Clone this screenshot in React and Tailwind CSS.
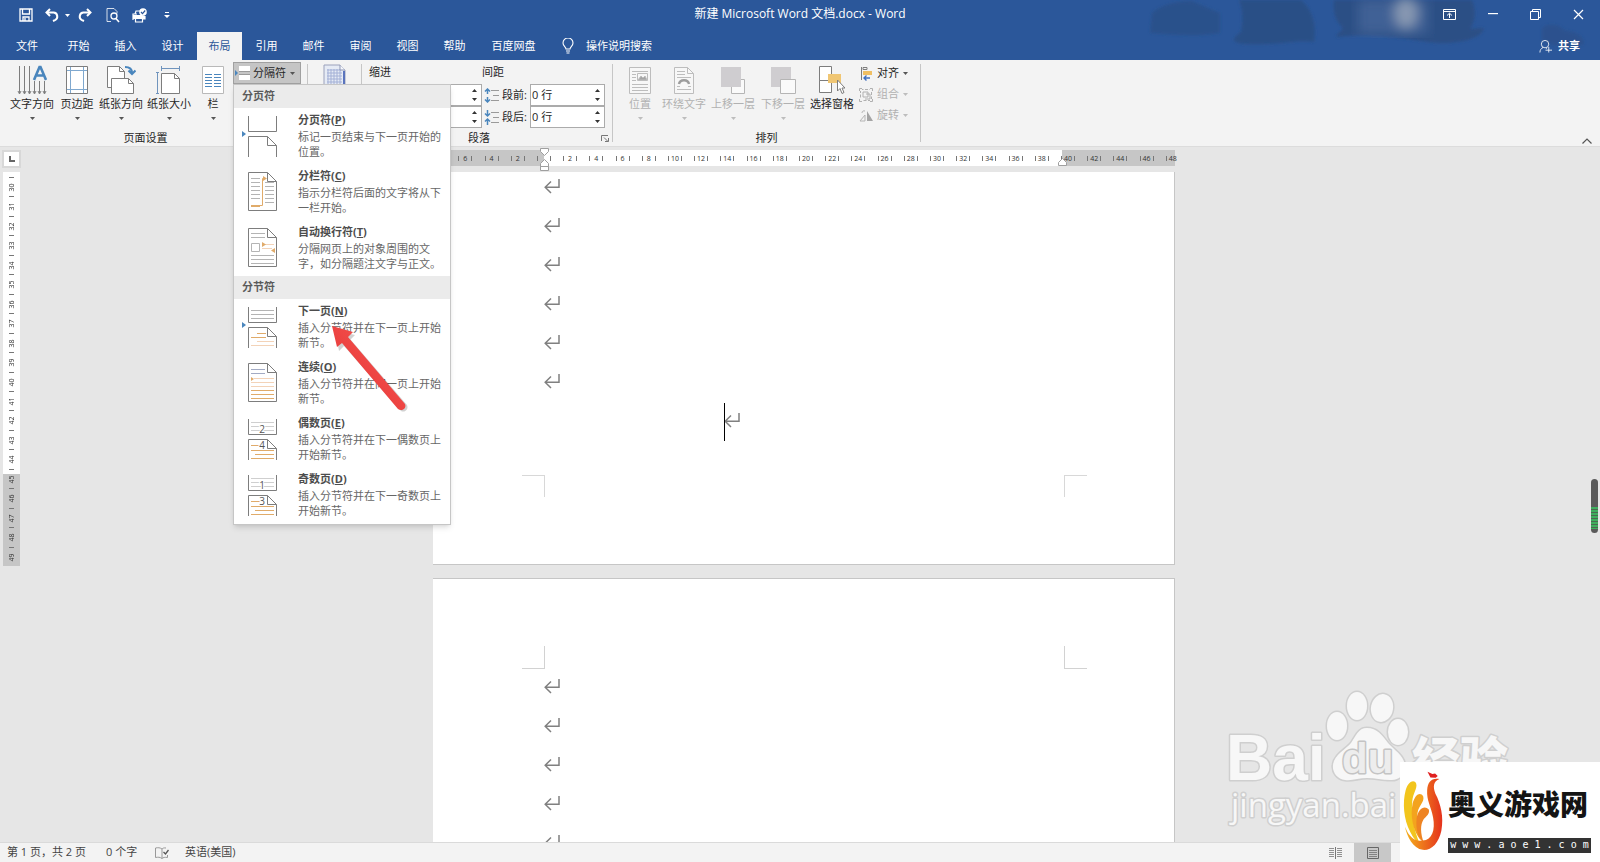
import { Fragment, useState } from "react";

const TABS = ["开始", "插入", "设计", "布局", "引用", "邮件", "审阅", "视图", "帮助"];

const PAGE_BREAKS = [
    { title: "分页符", hotkey: "P", text: "标记一页结束与下一页开始的位置。", icon: "page" },
    { title: "分栏符", hotkey: "C", text: "指示分栏符后面的文字将从下一栏开始。", icon: "column" },
    { title: "自动换行符", hotkey: "T", text: "分隔网页上的对象周围的文字，如分隔题注文字与正文。", icon: "wrap" },
];

const SECTION_BREAKS = [
    { title: "下一页", hotkey: "N", text: "插入分节符并在下一页上开始新节。", icon: "next" },
    { title: "连续", hotkey: "O", text: "插入分节符并在同一页上开始新节。", icon: "continuous" },
    { title: "偶数页", hotkey: "E", text: "插入分节符并在下一偶数页上开始新节。", icon: "even" },
    { title: "奇数页", hotkey: "D", text: "插入分节符并在下一奇数页上开始新节。", icon: "odd" },
];

const RULER_H = [8, 6, 4, 2, 0, ...Array.from({ length: 24 }, (_, i) => (i + 1) * 2)];
const RULER_V = Array.from({ length: 20 }, (_, i) => i + 30);

const Caret = ({ className = "text-[#555]" }) => (
    <svg className={className} width="5" height="3" viewBox="0 0 5 3" aria-hidden="true">
        <path d="M0 0h5L2.5 3z" fill="currentColor" />
    </svg>
);

/* ---------- Title bar ---------- */

const SaveIcon = () => (
    <svg width="14" height="14" viewBox="0 0 14 14" fill="none" stroke="#fff" strokeWidth="1.3">
        <path d="M1 1h12v12H1z" />
        <path d="M3.5 1v5h7V1" />
        <path d="M4 13V9h6v4M6 10v3" />
    </svg>
);

const UndoIcon = ({ flip }) => (
    <svg width="14" height="14" viewBox="0 0 14 14" fill="none" stroke="#fff" strokeWidth="2" className={flip ? "-scale-x-100" : ""}>
        <path d="M5 1L1.5 4.5 5 8" />
        <path d="M2 4.5h6.5a4 4 0 0 1 1.5 7.6L8 13" />
    </svg>
);

const PreviewIcon = () => (
    <svg width="14" height="15" viewBox="0 0 14 15" fill="none" stroke="#fff">
        <path d="M5 13.5H1V.5h7l3 3v2" opacity=".8" />
        <circle cx="8" cy="8" r="3" strokeWidth="1.3" />
        <path d="M10 10.5l3 3.5" strokeWidth="1.6" />
    </svg>
);

const PrintIcon = () => (
    <svg width="16" height="15" viewBox="0 0 16 15" fill="none" stroke="#fff" strokeWidth="1.2">
        <path d="M1 12V6h4M13 8v3h-2M3 6l1-3h4" />
        <path d="M1 7h9l3 1v3H1z" fill="#fff" stroke="none" />
        <path d="M3.500 10.500h7v3.500h-7z" fill="#2b579a" />
        <circle cx="11" cy="4" r="3.8" fill="#fff" stroke="none" />
        <path d="M9 4l1.5 1.7L13.2 2.5" stroke="#2b579a" />
    </svg>
);

const TitleSmudges = () => (
    <svg className="pointer-events-none absolute top-0 right-0" width="460" height="60" viewBox="0 0 460 60" aria-hidden="true">
        <defs>
            <filter id="soft"><feGaussianBlur stdDeviation="1.5" /></filter>
            <filter id="softer"><feGaussianBlur stdDeviation="6" /></filter>
        </defs>
        <g fill="#2a4c80" filter="url(#soft)">
            <path d="M12 13c8-8 24-12 40-12l28 12v20c-24 4-46 2-70 0z" opacity=".55" />
            <path d="M99 0h62c10 8 16 22 13 42-15-3-40 4-68 2-14-1-16-4-5-12 2-12 2-22-2-32z" opacity=".75" />
            <path d="M194 0h138c4 10 4 20-2 29l14-1c-2 9-18 14-38 15-24 1-56-12-110-6 2-6 8-6 6-10-8-8-9-18-8-27z" opacity=".8" />
            <path d="M402 28c6-6 18-4 22 2 10 2 20 4 20 14-14 6-34 2-42-4z" opacity=".45" />
        </g>
        <g filter="url(#softer)">
            <path d="M218 0h70v34h-70z" fill="#4a6a9d" opacity=".7" />
            <ellipse cx="266" cy="13" rx="12" ry="16" fill="#8f9fb5" opacity=".9" />
        </g>
    </svg>
);

const TitleBar = () => (
    <div className="relative flex h-7 items-center justify-between">
        <div className="flex items-center pt-0.5 pl-[19px] text-white">
            <button aria-label="保存" className="mr-3"><SaveIcon /></button>
            <button aria-label="撤消" className="mr-1.5"><UndoIcon /></button>
            <Caret className="mr-2 text-white" />
            <button aria-label="恢复" className="mr-3.5"><UndoIcon flip /></button>
            <button aria-label="打印预览" className="mr-3"><PreviewIcon /></button>
            <button aria-label="快速打印" className="mr-4"><PrintIcon /></button>
            <button aria-label="自定义快速访问工具栏">
                <svg width="6" height="7" viewBox="0 0 6 7" fill="#fff"><path d="M1 0h4v1H1zM0 3h6L3 6z" /></svg>
            </button>
        </div>
        <h1 className="absolute inset-x-0 text-center text-xs whitespace-pre text-white">新建 Microsoft Word 文档.docx - Word</h1>
        <div className="relative flex">
            <button aria-label="功能区显示选项" className="flex w-[43px] justify-center">
                <svg width="13" height="11" viewBox="0 0 13 11" fill="none" stroke="#fff">
                    <path d="M.5.5h12v10H.5zM.5 2.500h12M6.500 9V4.500M4 6.500l2.500-2.300L9 6.500" />
                </svg>
            </button>
            <button aria-label="最小化" className="flex w-[43px] items-center justify-center">
                <svg width="10" height="2" viewBox="0 0 10 2"><path d="M0 0h10v1.200H0z" fill="#fff" /></svg>
            </button>
            <button aria-label="还原" className="flex w-[43px] justify-center">
                <svg width="11" height="11" viewBox="0 0 11 11" fill="none" stroke="#fff">
                    <path d="M.5 2.500h8v8h-8zM2.500 2.500v-2h8v8h-2" />
                </svg>
            </button>
            <button aria-label="关闭" className="flex w-[43px] justify-center">
                <svg width="11" height="11" viewBox="0 0 11 11" stroke="#fff" strokeWidth="1.200"><path d="M1 1l9 9M10 1l-9 9" /></svg>
            </button>
        </div>
    </div>
);

const TabRow = ({ active, onSelect }) => (
    <div className="relative mt-1 flex h-7 items-stretch text-white">
        <nav className="flex gap-0.5">
            <button className="w-[54px]">文件</button>
            {TABS.map((tab) => (
                <button
                    key={tab}
                    onClick={() => onSelect(tab)}
                    className={tab === active ? "w-[45px] bg-[#f3f3f3] text-[#2b579a]" : "w-[45px]"}
                >
                    {tab}
                </button>
            ))}
            <button className="w-[69px]">百度网盘</button>
        </nav>
        <button className="ml-3.5 flex items-center gap-3">
            <svg width="12" height="16" viewBox="0 0 12 16" fill="none" stroke="#fff" strokeWidth="1.1">
                <path d="M4 11c0-2-3-3-3-6a5 5 0 0 1 10 0c0 3-3 4-3 6zM4 13h4M4.5 15h3" />
            </svg>
            操作说明搜索
        </button>
        <button className="mr-5 ml-auto flex items-center gap-1.5 font-bold">
            <svg width="13" height="14" viewBox="0 0 14 14" fill="none" stroke="#fff" strokeWidth=".9">
                <circle cx="6.500" cy="5" r="4" />
                <path d="M1 14c0-3 1.500-4.500 3.500-5.500M7.500 9l1 .8M7 11.500h7M10.500 8v6" />
            </svg>
            共享
        </button>
    </div>
);

/* ---------- Ribbon icons ---------- */

const line = "#7d7d7d";
const blue = "#4a86bd";

const TextDirectionIcon = () => (
    <svg width="30" height="30" viewBox="0 0 30 30" fill="none" stroke={line}>
        <path d="M2.500 1v27M7.500 1v27M12.500 1v27M17.500 16v12M22.500 16v12M27.500 16v12" />
        <path d="M1 26l1.500 3L4 26M6 26l1.500 3L9 26M11 26l1.500 3 1.500-3M16 26l1.500 3 1.500-3M21 26l1.500 3 1.500-3M26 26l1.500 3 1.500-3" />
        <path d="M17 15l5.500-13h1L29 15M19 10.500h8" stroke={blue} strokeWidth="2.600" />
    </svg>
);

const MarginsIcon = () => (
    <svg width="22" height="28" viewBox="0 0 22 28" fill="#fff">
        <path d="M.5.5h21v27H.5z" stroke={line} />
        <path d="M4.500 1v26M17.500 1v26M1 4.500h20M1 23.500h20" stroke="#7fa8cf" />
    </svg>
);

const OrientationIcon = () => (
    <svg width="30" height="30" viewBox="0 0 30 30" fill="#fff" stroke={line}>
        <path d="M1.500 1.500h12l5 5v16h-17z" />
        <path d="M13.500 1.500v5h5" fill="none" />
        <path d="M5.500 13.500h17l5 5v10h-22z" />
        <path d="M22.500 13.500v5h5" fill="none" />
        <path d="M19 2c5 0 7 2 7 6M22.500 5.500L26 9l3.500-3.500" fill="none" stroke={blue} strokeWidth="2.200" />
    </svg>
);

const SizeIcon = () => (
    <svg width="26" height="30" viewBox="0 0 26 30" fill="#fff" stroke={line}>
        <path d="M5.500 8.500h13l5 5v15h-18z" />
        <path d="M18.500 8.500v5h5" fill="none" />
        <path d="M5 3.500h19M5.500 1v5M23.500 1v5M1.500 8v20M0 7.500h3M0 28.500h3" stroke="#7094bd" fill="none" />
    </svg>
);

const ColumnsIcon = () => (
    <svg width="22" height="28" viewBox="0 0 22 28" fill="#fff">
        <path d="M.5.5h21v27H.5z" stroke="#b9b9b9" />
        <path d="M3 8.500h7M3 11.500h7M3 14.500h7M3 17.500h7M3 20.500h7M12 8.500h7M12 11.500h7M12 14.500h7M12 17.500h7M12 20.500h7" stroke={blue} />
    </svg>
);

const GridPaperIcon = () => (
    <svg width="24" height="30" viewBox="0 0 24 30">
        <path d="M1 1h16l5 5v23H1z" fill="#e6ebf5" stroke="#9aa1bb" />
        <path d="M4 6h14M4 9h15M4 12h15M4 15h15M4 18h15M5 5v20M8 5v20M11 5v20M14 5v20M17 5v20" stroke="#a3b0d6" />
        <path d="M17 1v5h5" fill="#f6f8fc" stroke="#8f97b5" />
        <path d="M20 7h2v22h-2z" fill="#5a74bd" />
    </svg>
);

const PositionIcon = () => (
    <svg width="22" height="27" viewBox="0 0 22 27" fill="#f7f7f7" stroke="#bdbdbd">
        <path d="M.5.5h21v26H.5z" />
        <path d="M3 4.500h16M3 7.500h4M3 10.500h4M3 13.500h4M3 17.500h16M3 20.500h16M3 23.500h16" />
        <path d="M8.500 6.500h10v7h-10z" />
        <path d="M9 13l3-4 2 2 2-2 2 4z" fill="#a5a5a5" />
    </svg>
);

const WrapTextIcon = () => (
    <svg width="20" height="27" viewBox="0 0 20 27" fill="#f7f7f7" stroke="#bdbdbd">
        <path d="M.5.5h13l6 6v20H.5z" />
        <path d="M13.500.5v6h6" fill="none" />
        <path d="M3 4.500h8M3 7.500h8M3 10.500h14M3 22.500h14M3 19.500h3M14 19.500h3" />
        <path d="M5 17c1-5 9-5 10 0" fill="none" stroke="#9d9d9d" strokeWidth="2.500" />
    </svg>
);

const BringForwardIcon = () => (
    <svg width="26" height="28" viewBox="0 0 26 28">
        <path d="M11.500 13.500h13v14h-13z" fill="#fafafa" stroke="#b5b5b5" />
        <path d="M1 1h20v20H1z" fill="#cfcdd0" />
    </svg>
);

const SendBackIcon = () => (
    <svg width="26" height="28" viewBox="0 0 26 28">
        <path d="M1 1h20v20H1z" fill="#cfcdd0" />
        <path d="M10.500 13.500h15v14h-15z" fill="#fafafa" stroke="#b5b5b5" />
    </svg>
);

const SelectionPaneIcon = () => (
    <svg width="26" height="29" viewBox="0 0 26 29" fill="#fff" stroke={line}>
        <path d="M.5.5h12v14H.5zM.5 14.500h12v12H.5z" />
        <path d="M9 8h13v9H9z" fill="#f0c673" stroke="none" />
        <path d="M18.500 14v11l2.500-2.500 2 5 2-1-2-4.500h3z" />
    </svg>
);

const BreakIcon = () => (
    <svg width="17" height="16" viewBox="0 0 17 16" fill="#fff">
        <path d="M5 1h11v5H5zM5 10h11v5H5z" />
        <path d="M5 6.500h11M5 9.500h11" stroke="#9a9a9a" />
        <path d="M1 5l3 3-3 3z" fill={blue} />
    </svg>
);

const SpacingIcon = ({ after }) => (
    <svg width="15" height="15" viewBox="0 0 15 15" fill="none">
        <path d="M7 2.500h8M9 7.500h6M7 12.500h8" stroke="#9a9a9a" />
        {after ? (
            <path d="M3.500 0v6M1 3.500l2.500 2.500L6 3.500M3.500 15V9M1 11.500L3.500 9 6 11.500" stroke={blue} strokeWidth="1.500" />
        ) : (
            <path d="M3.500 1v5M3.500 9v5M1 3.500L3.500 1 6 3.500M1 11.500L3.500 14 6 11.500" stroke={blue} strokeWidth="1.500" />
        )}
    </svg>
);

const AlignIcon = () => (
    <svg width="14" height="15" viewBox="0 0 14 15" fill="none">
        <path d="M2.500 1v13" stroke={line} />
        <path d="M4 1.500h4v2H4z" stroke={line} />
        <path d="M4 5h9v4H4z" fill="#f0bf63" />
        <path d="M5 12h6M7.500 9.500L5 12l2.500 2.500" stroke="#3f6fbf" strokeWidth="1.400" />
    </svg>
);

const GroupIcon = () => (
    <svg width="14" height="14" viewBox="0 0 14 14" fill="none" stroke="#b0b0b0">
        <path d="M1.500 1.500h11v11h-11z" strokeDasharray="3 1.500" />
        <path d="M4 4h5v5H4zM7 6h4v5H6" />
        <path d="M0 0h3v3H0zM11 0h3v3h-3zM0 11h3v3H0zM11 11h3v3h-3z" fill="#f3f3f3" stroke="none" />
        <path d="M.5 3V.5H3M11 .5h2.500V3M.5 11v2.500H3M11 13.500h2.500V11" />
    </svg>
);

const RotateIcon = () => (
    <svg width="14" height="12" viewBox="0 0 14 12">
        <path d="M8 1v10h6z" fill="#a5a5a5" />
        <path d="M6 5v6H1zM3 3c0-2 1.500-2.500 3-2" fill="none" stroke="#b5b5b5" />
    </svg>
);

/* ---------- Ribbon ---------- */

const BigButton = ({ label, icon, width, disabled, plain }) => (
    <button disabled={disabled} className={`flex flex-col items-center pt-1 ${width} ${disabled ? "text-[#b1b1b1]" : "text-[#262626]"}`}>
        <span className="flex h-8 items-center">{icon}</span>
        <span className="leading-4 whitespace-nowrap">{label}</span>
        <span className="flex h-3 items-center">
            {!plain && <Caret className={disabled ? "text-[#bdbdbd]" : "text-[#555]"} />}
        </span>
    </button>
);

const SmallButton = ({ label, icon, disabled }) => (
    <button disabled={disabled} className={`flex h-[21px] items-center gap-1 ${disabled ? "text-[#b1b1b1]" : "text-[#262626]"}`}>
        <span className="flex w-3.5 justify-center">{icon}</span>
        {label}
        <Caret className={disabled ? "text-[#bdbdbd]" : "text-[#555]"} />
    </button>
);

const Spinner = ({ id, label, value }) => (
    <span className="flex h-[22px] w-[75px] items-center border border-[#ababab] bg-white pr-1">
        <input id={id} aria-label={label} defaultValue={value} className="min-w-0 flex-1 bg-transparent pl-px outline-none" />
        <svg width="5" height="12" viewBox="0 0 5 12" fill="#333"><path d="M0 3h5L2.500 0zM0 9h5l-2.500 3z" /></svg>
    </span>
);

const Group = ({ label, className, captionClass = "", children }) => (
    <section className={`flex flex-col ${className}`}>
        <div className="flex h-[68px]">{children}</div>
        <p className={`h-[18px] text-center leading-5 ${captionClass}`}>{label}</p>
    </section>
);

const Separator = () => <div className="my-1 w-px bg-[#c6c6c6]" />;

const Rule = ({ d, c = "#b4b4b4" }) => <path d={d} stroke={c} fill="none" />;

const MenuIcon = ({ kind }) => {
    const orange = "#e0ab6a";
    const peach = "#f3d3b8";
    const full = kind === "column" || kind === "wrap" || kind === "continuous";
    return (
        <svg width="40" height="44" viewBox="0 0 40 44" fill="none" className="shrink-0" aria-hidden="true">
            {kind === "column" && (
                <>
                    <Rule d="M11 8.500h9M11 12.500h9M11 16.500h9M11 20.500h9M11 24.500h9M11 28.500h9M25 16.500h9M25 20.500h9M25 24.500h9M25 28.500h9M25 32.500h9M25 12.500h9" />
                    <path d="M11 35.500h11.500v-27H25" stroke={orange} />
                    <path d="M11 35h9v2h-9zM23 6l4 2.500-4 2.500z" fill={orange} />
                </>
            )}
            {kind === "wrap" && (
                <>
                    <Rule d="M11 7.500h14M11 11.500h14M11 29.500h23M11 33.500h23M11 37.500h23M11.500 17.500h8v8h-8z" />
                    <path d="M23 18.500h11M22 22.500h10" stroke={peach} />
                    <path d="M22 16l4 2.500-4 2.500zM35 22l-4 2.500 4 2.500z" fill={orange} />
                </>
            )}
            {kind === "next" && (
                <>
                    <Rule d="M11 5.500h23M11 9.500h23M11 13.500h23" />
                    <Rule d="M17 28.500h9M11 32.500h15" c={orange} />
                    <Rule d="M17 36.500h17M11 40.500h23" c={peach} />
                </>
            )}
            {kind === "continuous" && (
                <>
                    <Rule d="M11 8.500h14M11 12.500h14" c="#a3abc4" />
                    <Rule d="M14 17.500h20M11 21.500h23M11 25.500h23" c={peach} />
                    <Rule d="M11 29.500h23M11 33.500h23M11 37.500h23" c={orange} />
                    <path d="M11 16l3 2-3 2z" fill={orange} />
                </>
            )}
            {(kind === "even" || kind === "odd") && (
                <>
                    <Rule d="M11 5.500h23M11 9.500h23M11 13.500h23" c="#cfcfcf" />
                    <Rule d="M11 28.500h14M11 33.500h23M15 37.500h19M11 41.500h23" c={orange} />
                    <text x="22" y="16" fontSize="10" textAnchor="middle" fill="#555" stroke="#fff" strokeWidth="2" paintOrder="stroke">{kind === "even" ? 2 : 1}</text>
                    <text x="22" y="32" fontSize="10" textAnchor="middle" fill="#555" stroke="#fff" strokeWidth="2" paintOrder="stroke">{kind === "even" ? 4 : 3}</text>
                </>
            )}
            {full ? (
                <>
                    <path d="M8.500 2.500h19l9 9v29h-28z" stroke={line} />
                    <path d="M27.500 2.500v9h9" stroke={line} />
                </>
            ) : (
                <>
                    <path d="M8.500 2v15.500h28V2M8.500 43V22.500h19l9 9V43" stroke={line} />
                    <path d="M27.500 22.500v9h9" stroke={line} />
                </>
            )}
            {(kind === "page" || kind === "next") && <path d="M2 17l4 3-4 3z" fill={blue} />}
        </svg>
    );
};

const MenuSection = ({ title, items }) => (
    <>
        <h2 className="h-[23px] bg-[#ebebeb] pl-2 leading-[22px] font-bold text-[#5b5b5b]">{title}</h2>
        {items.map((item) => (
            <button key={item.title} role="menuitem" className="flex h-14 w-full items-start pt-1 pl-1.5 text-left">
                <span className="mt-0.5"><MenuIcon kind={item.icon} /></span>
                <span className="ml-[18px] w-[148px]">
                    <span className="block leading-4 font-bold text-[#4d4d4d]">
                        {item.title}(<u>{item.hotkey}</u>)
                    </span>
                    <span className="mt-px block leading-[15px] text-[#666]">{item.text}</span>
                </span>
            </button>
        ))}
    </>
);

const BreaksMenu = () => (
    <div role="menu" className="absolute top-[22px] left-0 z-20 w-[218px] border border-[#c6c6c6] bg-white pb-px shadow-md">
        <MenuSection title="分页符" items={PAGE_BREAKS} />
        <MenuSection title="分节符" items={SECTION_BREAKS} />
        <svg className="pointer-events-none absolute top-[237px] left-[94px]" width="90" height="100" viewBox="0 0 90 100" aria-hidden="true">
            <defs>
                <linearGradient id="arrowRed" x1="0" y1="1" x2="1" y2="0">
                    <stop offset="0" stopColor="#d8302f" />
                    <stop offset=".5" stopColor="#ee4543" />
                    <stop offset="1" stopColor="#f4605c" />
                </linearGradient>
            </defs>
            <path d="M7 8l20 5-4.500 4.500L79 83c2 4-2 8-6 6L16 24l-5 5z" fill="#000" opacity=".18" />
            <path d="M4 4l21 6-5 5L77 82c2 4-3 8-7 5L14 21l-5 4z" fill="url(#arrowRed)" />
        </svg>
    </div>
);

const Ribbon = ({ menuOpen, toggleMenu }) => (
    <div className="relative z-10 flex border-b border-[#dcdcdc] bg-[#f3f3f3] text-[#262626]">
        <Group label="页面设置" className="w-[307px]" captionClass="pr-4">
            <div className="flex pl-[7px]">
                <BigButton label="文字方向" icon={<TextDirectionIcon />} width="w-[50px]" />
                <BigButton label="页边距" icon={<MarginsIcon />} width="w-10" />
                <BigButton label="纸张方向" icon={<OrientationIcon />} width="w-12" />
                <BigButton label="纸张大小" icon={<SizeIcon />} width="w-12" />
                <BigButton label="栏" icon={<ColumnsIcon />} width="w-10" />
            </div>
            <div className="relative mt-0.5 self-start">
                <button
                    onClick={toggleMenu}
                    aria-expanded={menuOpen}
                    className="flex h-[22px] w-[68px] items-center border border-[#a0a0a0] bg-[#c5c5c5]"
                >
                    <BreakIcon />
                    <span className="mr-1 ml-0.5">分隔符</span>
                    <Caret />
                </button>
                {menuOpen && <BreaksMenu />}
            </div>
        </Group>
        <Separator />
        <Group className="w-[53px]">
            <button aria-label="稿纸设置" className="mx-auto flex items-start pt-1"><GridPaperIcon /></button>
        </Group>
        <Separator />
        <Group label="段落" className="relative w-[250px]" captionClass="pr-4">
            <div className="w-[120px] pl-[7px]">
                <p className="h-6 leading-6">缩进</p>
                <div className="flex flex-col items-end">
                    <Spinner id="indent-left" label="左缩进" />
                    <Spinner id="indent-right" label="右缩进" />
                </div>
            </div>
            <div className="flex-1">
                <p className="h-6 leading-6">间距</p>
                <div className="flex h-[22px] items-center">
                    <span className="ml-0.5 w-[18px]"><SpacingIcon /></span>
                    <label htmlFor="space-before" className="w-7">段前:</label>
                    <Spinner id="space-before" value="0 行" />
                </div>
                <div className="flex h-[22px] items-center">
                    <span className="ml-0.5 w-[18px]"><SpacingIcon after /></span>
                    <label htmlFor="space-after" className="w-7">段后:</label>
                    <Spinner id="space-after" value="0 行" />
                </div>
            </div>
            <button aria-label="段落设置" className="absolute right-[3px] bottom-1">
                <svg width="8" height="7" viewBox="0 0 8 7" fill="none" stroke="#777"><path d="M.5 6V.5H7M3 2.500l4 4M7.500 3v3.500H4" /></svg>
            </button>
        </Group>
        <Separator />
        <Group label="排列" className="w-[307px]">
            <div className="flex pl-[7px]">
                <BigButton label="位置" icon={<PositionIcon />} width="w-10" disabled />
                <BigButton label="环绕文字" icon={<WrapTextIcon />} width="w-12" disabled />
                <BigButton label="上移一层" icon={<BringForwardIcon />} width="w-[50px]" disabled />
                <BigButton label="下移一层" icon={<SendBackIcon />} width="w-[50px]" disabled />
                <BigButton label="选择窗格" icon={<SelectionPaneIcon />} width="w-12" plain />
            </div>
            <div className="flex flex-col pt-[3px] pl-[3px]">
                <SmallButton label="对齐" icon={<AlignIcon />} />
                <SmallButton label="组合" icon={<GroupIcon />} disabled />
                <SmallButton label="旋转" icon={<RotateIcon />} disabled />
            </div>
        </Group>
        <Separator />
        <button aria-label="折叠功能区" className="mr-2 mb-0.5 ml-auto self-end">
            <svg width="10" height="6" viewBox="0 0 10 6" fill="none" stroke="#555" strokeWidth="1.200"><path d="M.5 5.500L5 1l4.500 4.500" /></svg>
        </button>
    </div>
);

/* ---------- Document ---------- */

const ReturnMark = () => (
    <svg width="16" height="15" viewBox="0 0 16 15" fill="none" stroke="#808080" strokeWidth="1.500">
        <path d="M15 0v8.200H1.500M7 2.500L1.200 8.200 7 14" />
    </svg>
);

const Paragraph = () => (
    <div className="h-[39px] pl-[111px]"><ReturnMark /></div>
);

const HorizontalRuler = () => (
    <div className="relative mt-[3px] flex h-4 w-[742px]">
        <div className="w-[111px] bg-[#c6c6c6]" />
        <div className="flex-1 bg-white" />
        <div className="w-[113px] bg-[#c6c6c6]" />
        <div className="absolute inset-y-0 -left-[7px] flex w-[760px] items-center">
            {RULER_H.map((n, i) => (
                <div key={i} className="flex flex-1 items-center justify-center text-[7px] leading-none text-[#333]">
                    <span className="h-[5px] w-px bg-[#777]" />
                    <span className="flex w-3 justify-center">{n !== 0 && n}</span>
                    <span className={n === 48 ? "h-[5px] w-px" : "h-[5px] w-px bg-[#777]"} />
                </div>
            ))}
        </div>
        <svg className="absolute -top-0.5 left-[107px]" width="9" height="24" viewBox="0 0 9 24" fill="#fff" stroke="#9f9f9f">
            <path d="M.5.5h8v3l-4 4-4-4zM.5 18.500v-3l4-4 4 4v3zM.5 18.500h8v4h-8z" />
        </svg>
        <svg className="absolute bottom-0 left-[625px]" width="9" height="8" viewBox="0 0 9 8" fill="#fff" stroke="#9f9f9f">
            <path d="M.5 7.500v-3l4-4 4 4v3z" />
        </svg>
    </div>
);

const VerticalRuler = () => (
    <div className="absolute top-0 left-0 w-[21px] pl-0.5">
        <div className="mt-[3px] flex h-[18px] w-[19px] items-center justify-center border-2 border-[#d8d8d8] bg-white">
            <svg width="6" height="6" viewBox="0 0 6 6"><path d="M1 0v5h5" fill="none" stroke="#666" strokeWidth="2" /></svg>
        </div>
        <div className="mt-1 ml-px flex h-[394px] w-[17px] flex-col bg-linear-to-b from-white from-[302px] to-[#c6c6c6] to-[302px] pt-[5px]">
            {RULER_V.map((n) => (
                <Fragment key={n}>
                    <span className="mx-auto h-px w-[5px] shrink-0 bg-[#777]" />
                    <span className="mx-auto flex flex-1 rotate-180 items-center justify-center text-[7px] leading-none text-[#333] [writing-mode:vertical-rl]">{n}</span>
                </Fragment>
            ))}
        </div>
    </div>
);

const Watermark = () => (
    <svg className="absolute right-0 bottom-0" width="400" height="172" viewBox="0 0 400 172" fill="#f7f7f7" stroke="#cfcfcf" strokeWidth="3" paintOrder="stroke" strokeLinejoin="round">
        <text x="26" y="110" fontSize="64" fontWeight="bold" fontFamily="'Liberation Sans', sans-serif">Bai</text>
        <ellipse cx="137" cy="56" rx="10" ry="14" />
        <ellipse cx="157" cy="36" rx="10" ry="14" />
        <ellipse cx="182" cy="38" rx="11" ry="14" transform="rotate(10 182 38)" />
        <ellipse cx="198" cy="62" rx="10" ry="13" />
        <path d="M167 58c10 0 15 7 21 15 7 8 17 13 17 24 0 8-7 14-15 13-8 0-15-2-23-2s-15 3-22 2c-8-1-13-8-12-15 1-10 12-15 18-22 5-7 7-15 16-15z" />
        <text x="142" y="103" fontSize="42" fontWeight="bold" fontFamily="'Liberation Sans', sans-serif" fill="#ededed" stroke="#c4c4c4">du</text>
        <text x="212" y="107" fontSize="48" fontWeight="900" fontFamily="'Noto Sans CJK SC', sans-serif">经验</text>
        <text x="31" y="147" fontSize="33" fontFamily="'Open Sans', sans-serif">jingyan.bai</text>
    </svg>
);

const Document = () => (
    <main className="relative min-h-0 flex-1 overflow-hidden bg-[#e6e6e6]">
        <VerticalRuler />
        <div className="flex flex-col items-center pl-2">
            <HorizontalRuler />
            <article className="mt-1.5 w-[742px] border-r border-b border-[#c6c6c6] bg-white pt-[7px] pb-[67px]">
                {[1, 2, 3, 4, 5, 6].map((n) => <Paragraph key={n} />)}
                <div className="relative ml-[291px] h-[39px]">
                    <span className="absolute -top-2.5 left-0 h-[38px] w-px bg-black" />
                    <ReturnMark />
                </div>
                <div className="mt-[23px] flex justify-between pr-[87px] pl-[89px]">
                    <span className="h-[22px] w-[23px] border-t border-r border-[#d8d8d8]" />
                    <span className="h-[22px] w-[23px] border-t border-l border-[#d8d8d8]" />
                </div>
            </article>
            <article className="mt-[13px] w-[742px] border-t border-r border-[#c6c6c6] bg-white pt-[67px]">
                <div className="mb-2.5 flex justify-between pr-[87px] pl-[89px]">
                    <span className="h-[23px] w-[23px] border-r border-b border-[#d2d2d2]" />
                    <span className="h-[23px] w-[23px] border-b border-l border-[#d2d2d2]" />
                </div>
                {[1, 2, 3, 4, 5].map((n) => <Paragraph key={n} />)}
            </article>
        </div>
        <div className="absolute top-[332px] right-0.5 flex h-[54px] w-[7px] flex-col overflow-hidden rounded-full bg-[#5a5a5a]">
            <div className="mt-auto mb-1 h-[22px] bg-[repeating-linear-gradient(#3fae5e_0_2px,#4a6a50_2px_3px)]" />
        </div>
        <Watermark />
    </main>
);

const StatusBar = () => (
    <footer className="flex h-5 items-center border-t border-[#dadada] bg-[#f3f3f3] pl-[7px] text-[#444]">
        <span className="w-[99px] whitespace-nowrap">第 1 页，共 2 页</span>
        <span className="w-[49px]">0 个字</span>
        <svg className="mr-4" width="14" height="12" viewBox="0 0 14 12" fill="none" stroke="#999">
            <path d="M7 11.500C5 10 3 10 .5 10.500V1C3 .5 5 .5 7 2v9.500c1-1 3-1.500 5.500-1V8M7 2c1-1 2-1.300 4-1" />
            <path d="M8.500 5l2 2L13.500 3" stroke="#555" strokeWidth="1.300" />
        </svg>
        <span>英语(美国)</span>
        <div className="mr-[209px] ml-auto flex h-full">
            <button aria-label="阅读视图" className="mr-3">
                <svg width="13" height="12" viewBox="0 0 13 12" fill="none" stroke="#777">
                    <path d="M6.500 0v12" />
                    <path d="M0 1.500h5M0 3.500h5M0 5.500h5M0 7.500h5M0 9.500h5M8 1.500h5M8 3.500h5M8 5.500h5M8 7.500h5M8 9.500h5" strokeWidth=".8" />
                </svg>
            </button>
            <button aria-label="页面视图" className="flex w-[37px] items-center justify-center bg-[#c8c8c8]">
                <svg width="12" height="12" viewBox="0 0 12 12" fill="none" stroke="#666">
                    <path d="M.5.5h11v11H.5z" />
                    <path d="M2 3.500h8M2 5.500h8M2 7.500h8M2 9.500h8" strokeWidth=".7" />
                </svg>
            </button>
        </div>
    </footer>
);

const SiteLogo = () => (
    <div className="absolute right-0 bottom-0 z-30 flex h-[100px] w-[200px] items-start bg-white pt-2 pl-0.5">
        <svg width="43" height="82" viewBox="605 300 130 245">
            <defs>
                <linearGradient id="flame" x1="0" y1="0" x2="1" y2="0">
                    <stop offset="0" stopColor="#f5b21b" />
                    <stop offset="1" stopColor="#e5321d" />
                </linearGradient>
            </defs>
            <path d="M648 340c-6-14-24-8-32 20-10 38-6 88 14 126 10 20 20 30 30 38-20-44-28-92-24-130 2-26 16-40 12-54z" fill="#f2c51d" />
            <path d="M669 378c-8-14-24-8-32 22-8 40 2 84 25 112-8-30-14-58-10-84 4-24 22-32 17-50z" fill="#f3a31e" />
            <path d="M686 418c-12-14-32-4-37 27-3 34 5 60 23 75-12-30-12-56-2-72 8-10 20-16 16-30z" fill="#ee8423" />
            <path d="M718 326c-18 6-20 24-12 44 16 30 26 70 18 112-8 38-30 60-56 58-30-4-48-40-54-70 14 36 34 45 54 42 28-2 38-32 31-70-6-32-20-52-18-82 2-26 13-38 37-34z" fill="url(#flame)" />
            <path d="M682 304l15 7 8-2 8 8-6 5-16-1z" fill="#e02020" />
        </svg>
        <div className="ml-[3px]">
            <p className="pt-1.5 pb-2 font-['Noto_Sans_CJK_SC',sans-serif] text-[28px] leading-[54px] font-black whitespace-nowrap text-[#141414]">奥义游戏网</p>
            <p className="h-[15px] w-[143px] bg-[#333] text-center font-['DejaVu_Sans_Mono',monospace] text-[10px] leading-[14px] whitespace-nowrap text-white">w w w . a o e 1 . c o m</p>
        </div>
    </div>
);

const App = () => {
    const [activeTab, setActiveTab] = useState("布局");
    const [menuOpen, setMenuOpen] = useState(true);

    return (
        <div className="relative flex h-screen flex-col overflow-hidden font-['Open_Sans','Noto_Sans_CJK_SC',sans-serif] text-[11px]">
            <header className="relative bg-[#2b579a]">
                <TitleSmudges />
                <TitleBar />
                <TabRow active={activeTab} onSelect={setActiveTab} />
            </header>
            <Ribbon menuOpen={menuOpen} toggleMenu={() => setMenuOpen(!menuOpen)} />
            <Document />
            <StatusBar />
            <SiteLogo />
        </div>
    );
};

export default App;
